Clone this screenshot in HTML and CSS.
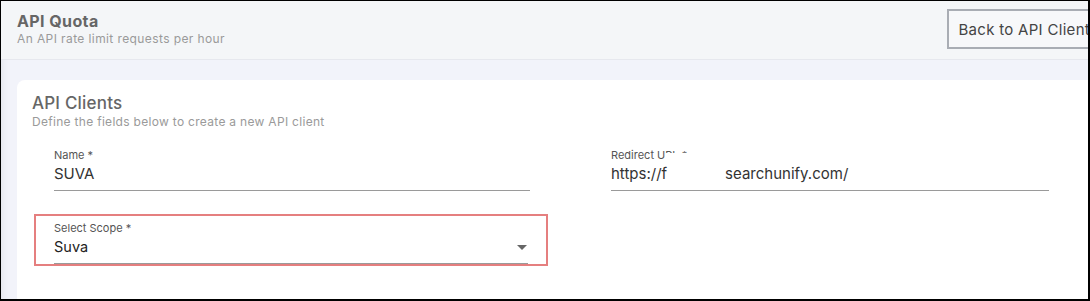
FILE: index.html
```html
<!DOCTYPE html>
<html>
<head>
  <meta name="viewport" content="width=device-width, initial-scale=1.0">
  <link rel="stylesheet" href="styles.css">
</head>
<body>
<div class="frame">

  <header class="top_bar">
    <div class="top_titles">
      <h1>API Quota</h1>
      <p>An API rate limit requests per hour</p>
    </div>
    <button class="back_btn">Back to API Client</button>
  </header>

  <main class="content">
    <section class="card">
      <h2>API Clients</h2>
      <p class="card_sub">Define the fields below to create a new API client</p>

      <div class="field_grid">
        <div class="field name_field">
          <label>Name *</label>
          <div class="field_value">SUVA</div>
        </div>

        <div class="field url_field">
          <label>Redirect U<span class="cut">RL *</span></label>
          <div class="field_value">https://f<span class="blank"></span>searchunify.com/</div>
        </div>

        <div class="scope_box">
          <div class="field select_field">
            <label>Select Scope *</label>
            <div class="field_value">
              Suva
              <span class="caret"></span>
            </div>
          </div>
        </div>
      </div>
    </section>
  </main>

</div>
</body>
</html>
```

FILE: styles.css
```css
html, body {
  margin: 0;
  padding: 0;
  background: #ffffff;
}

.frame {
  width: 1090px;
  height: 301px;
  box-sizing: border-box;
  border: 1px solid #000;
  border-right-width: 2px;
  border-bottom-width: 2px;
  overflow: hidden;
  font-family: Inter, "Open Sans", sans-serif;
  background: #f2f3fa;
  box-shadow: inset 6px 0 6px -4px rgba(0, 0, 0, 0.06);
}

.top_bar {
  display: flex;
  justify-content: space-between;
  align-items: flex-start;
  height: 58px;
  padding-left: 16px;
  background: #f4f6f8;
  border-bottom: 1px solid #e6e8ee;
}

.top_titles h1 {
  margin: 10px 0 0 0;
  font-size: 16px;
  line-height: 20px;
  font-weight: 700;
  letter-spacing: 0.4px;
  color: #666;
}

.top_titles p {
  margin: 1px 0 0 0;
  font-size: 12px;
  line-height: 14px;
  letter-spacing: 0.4px;
  color: #9a9a9a;
}

.back_btn {
  margin-top: 8px;
  margin-right: -13px;
  height: 40px;
  padding: 0 9px;
  border: 2px solid #a9adb4;
  background: #f7f8fa;
  font-family: inherit;
  font-size: 15px;
  letter-spacing: 0.3px;
  color: #444;
  white-space: nowrap;
}

.content {
  padding: 20px 0 0 16px;
}

.card {
  background: #fff;
  border-radius: 8px 0 0 0;
  padding: 13px 0 40px 15px;
  height: 260px;
}

.card h2 {
  margin: 0;
  font-size: 17px;
  line-height: 20px;
  font-weight: 500;
  letter-spacing: 0.2px;
  color: #666;
}

.card_sub {
  margin: 2px 0 0 0;
  font-size: 12px;
  line-height: 14px;
  letter-spacing: 0.3px;
  color: #9a9a9a;
}

.field_grid {
  display: grid;
  grid-template-columns: 476px 438px;
  column-gap: 81px;
  row-gap: 23px;
  margin: 20px 0 0 22px;
}

.field label {
  display: block;
  font-size: 11px;
  line-height: 12px;
  color: #555;
}

.field_value {
  position: relative;
  font-size: 15px;
  line-height: 20px;
  color: #333;
  padding: 3px 0 6px 0;
  border-bottom: 1px solid #9a9a9a;
}

.cut {
  display: inline-block;
  height: 4px;
  overflow: hidden;
  vertical-align: top;
  line-height: 12px;
}

.blank {
  display: inline-block;
  width: 58px;
}

.scope_box {
  grid-column: 1;
  margin-left: -20px;
  margin-right: -18px;
  padding: 6px 18px 0 18px;
  border: 2px solid #e57f7f;
}

.select_field .field_value {
  color: #222;
  font-size: 14.5px;
  padding: 3px 0 6px 0;
}

.caret {
  position: absolute;
  right: 1px;
  top: 11px;
  width: 0;
  height: 0;
  border-left: 5px solid transparent;
  border-right: 5px solid transparent;
  border-top: 5px solid #666;
}
```
